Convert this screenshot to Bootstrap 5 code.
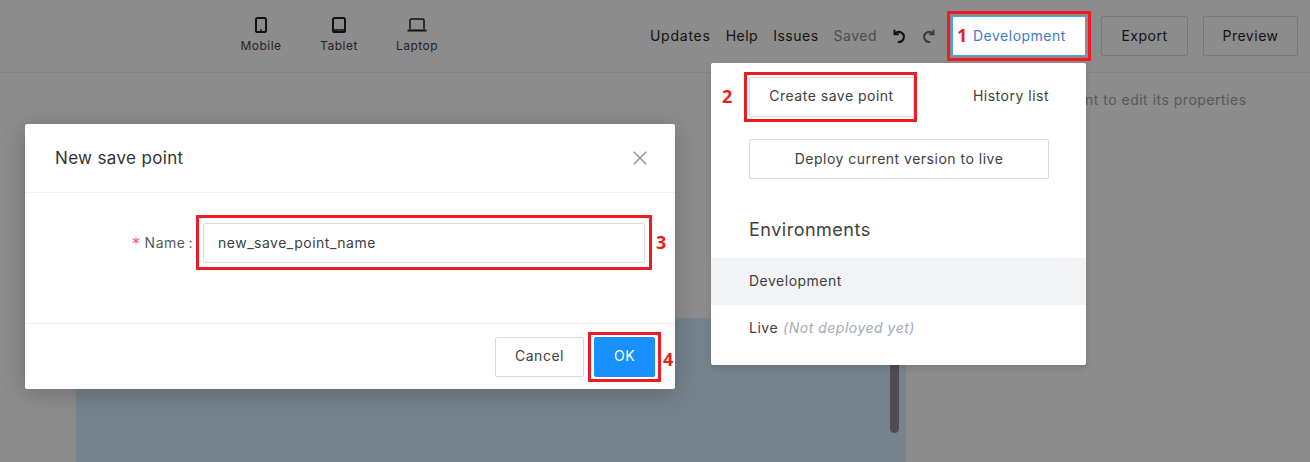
<!DOCTYPE html>
<html lang="en">
<head>
<meta charset="utf-8">
<title>New save point</title>
<link rel="stylesheet" href="https://cdn.jsdelivr.net/npm/bootstrap@5.3.0/dist/css/bootstrap.min.css">
<style>
html,body{height:462px;overflow:hidden}
body{font-family:Inter,"Liberation Sans",sans-serif;font-size:14px;letter-spacing:.5px;color:#262626;background:#fff;position:relative}
.top-bar{height:73px;border-bottom:1px solid #f0f0f0;padding:16px 12px 0 0}
.device-group{margin-left:222px}
.device-item{width:78px;font-size:12px;line-height:15px;color:#3f3f3f}
.device-item svg{display:block;margin-bottom:4px}
.bar-links{margin-left:auto;gap:15px;height:40px}
.bar-link{color:#262626;padding-bottom:2px}
.bar-link.wide-word{letter-spacing:.75px}
.bar-link.off{color:#8c8c8c;margin-right:-1px}
.undo-icon{margin-right:-1px}
.bar-btn{height:40px;border:1px solid #d9d9d9;border-radius:2px;background:#fff;color:#262626;font-size:14px;padding:0 0 2px;letter-spacing:.5px}
.dev-btn{width:134px;border-color:#40a0f5;color:#3f7cc9;text-align:left;padding:0 0 2px 20px;position:relative;z-index:2;background:#fff}
.exp-btn{margin-left:15px;width:87px}
.prev-btn{margin-left:15px;width:95px}
.work-area{height:389px;overflow:hidden}
.canvas-col{width:906px;position:relative;padding:245px 0 0 76px}
.canvas-sheet{width:830px;height:144px;background:#d8eeff;position:relative}
.scroll-thumb{position:absolute;right:7px;top:0;width:9px;height:115px;background:#8f8b96;border-radius:0 0 5px 5px}
.hint-text{padding:16px 0 0 66px;color:#a0a0a0;white-space:nowrap}
.dim-layer{position:absolute;inset:0;background:rgba(0,0,0,.45);z-index:1}
.dlg{position:absolute;z-index:2;left:25px;top:124px;width:650px;height:265px;border:0;border-radius:2px;box-shadow:0 4px 24px rgba(0,0,0,.22);display:flex;flex-direction:column;background:#fff}
.dlg-head{height:69px;padding:0 28px 0 30px;border-bottom:1px solid #f0f0f0}
.dlg-title{font-size:17px;font-weight:400;letter-spacing:.35px;color:#333}
.dlg-x{width:14px;height:14px;display:block}
.dlg-body{height:130px;padding:30px 30px 0 0}
.req-mark{color:#ff4d4f;font-family:"DejaVu Sans",sans-serif;font-size:16px;margin-right:4px;padding-top:3px}
.name-label{width:178px;height:40px;color:#595959;white-space:nowrap;padding-bottom:2px}
.name-colon{margin:0 10px 0 3px}
.name-input{width:442px;height:40px;border:1px solid #d9d9d9;border-radius:2px;font-size:14px;letter-spacing:.5px;color:#404040;padding:0 14px 2px}
.dlg-foot{height:66px;border-top:1px solid #f0f0f0;padding:0 20px;gap:10px}
.foot-btn{height:40px;border-radius:2px;font-size:14px;padding:0 0 2px;letter-spacing:.5px}
.cancel-btn{width:89px;background:#fff;border:1px solid #d9d9d9;color:#404040}
.ok-btn{width:61px;background:#1890ff;border:1px solid #1890ff;color:#fff}
.env-pop{position:absolute;z-index:2;left:711px;top:63px;width:375px;height:302px;background:#fff;border-radius:2px;box-shadow:0 3px 6px rgba(0,0,0,.12)}
.pop-tabs{padding:14px 37px 0 38px;height:76px}
.save-btn{width:165px;height:40px;border:1px solid #d9d9d9;border-radius:2px;background:#fff;color:#404040;font-size:14px;padding:0 0 4px;letter-spacing:.5px}
.hist-link{color:#404040;margin-left:auto;line-height:37px}
.deploy-wrap{padding:0 37px 0 38px;height:62px}
.deploy-btn{width:300px;height:40px;border:1px solid #d9d9d9;border-radius:2px;background:#fff;color:#404040;font-size:14px;padding:0 0 2px;letter-spacing:.5px}
.env-title{padding:0 38px;height:57px;margin:0;font-size:18px;font-weight:400;line-height:58px;color:#404040}
.env-row{padding:0 38px 2px;height:47px;border:0;border-top:1px solid #ececec;border-radius:0;background:#fff;color:#404040;display:flex;align-items:center;gap:5px}
.env-row.active-row{background:#f2f3f5}
.muted-note{color:#a3a9b8;font-style:italic}
.mark-box{position:absolute;z-index:3;border:3px solid #ed1c24;pointer-events:none}
.mark-num{position:absolute;z-index:3;color:#ed1c24;font-family:"Open Sans","Liberation Sans",sans-serif;font-weight:700;font-size:18px;line-height:20px;letter-spacing:0}
</style>
</head>
<body>
<header class="top-bar d-flex align-items-start">
  <nav class="device-group d-flex">
    <div class="device-item d-flex flex-column align-items-center">
      <svg width="16" height="18" viewBox="0 0 16 18" fill="none" stroke="#1f1f1f" stroke-width="2"><rect x="3" y="2" width="10" height="14" rx="1.6"/><circle cx="8" cy="14" r=".9" fill="#1f1f1f" stroke="none"/></svg>
      Mobile
    </div>
    <div class="device-item d-flex flex-column align-items-center">
      <svg width="16" height="18" viewBox="0 0 16 18" fill="none" stroke="#1f1f1f" stroke-width="2"><rect x="2" y="2" width="12" height="14" rx="1.6"/><path d="M2 14h12" stroke-width="1.600"/><circle cx="8" cy="14" r=".8" fill="#8c8c8c" stroke="none"/></svg>
      Tablet
    </div>
    <div class="device-item d-flex flex-column align-items-center">
      <svg width="20" height="18" viewBox="0 0 20 18" fill="none" stroke="#1f1f1f"><path d="M3 13V4.200c0-.7.5-1.200 1.200-1.200h11.600c.7 0 1.200.5 1.200 1.200V13" stroke-width="1.500"/><path d="M.5 14.500h19" stroke-width="2"/></svg>
      Laptop
    </div>
  </nav>
  <div class="bar-links d-flex align-items-center">
    <span class="bar-link wide-word">Updates</span>
    <span class="bar-link">Help</span>
    <span class="bar-link">Issues</span>
    <span class="bar-link off">Saved</span>
    <svg class="undo-icon" width="16" height="16" viewBox="0 0 16 16" fill="none" stroke="#1f1f1f" stroke-width="2"><path d="M3.500 1.800v4.400h4.400"/><path d="M3.800 6A5 5 0 1 1 6.800 13.800"/></svg>
    <svg width="16" height="16" viewBox="0 0 16 16" fill="none" stroke="#6e6e6e" stroke-width="2"><path d="M12.500 1.800v4.400H8.100"/><path d="M12.200 6A5 5 0 1 0 9.200 13.800"/></svg>
    <button class="btn bar-btn dev-btn" type="button">Development</button>
  </div>
  <button class="btn bar-btn exp-btn" type="button">Export</button>
  <button class="btn bar-btn prev-btn" type="button">Preview</button>
</header>
<main class="work-area d-flex">
  <div class="canvas-col">
    <div class="canvas-sheet"><div class="scroll-thumb"></div></div>
  </div>
  <div class="hint-text">Select an element to edit its properties</div>
</main>

<div class="dim-layer"></div>

<div class="dlg modal-content">
  <div class="dlg-head d-flex align-items-center justify-content-between">
    <h5 class="dlg-title m-0">New save point</h5>
    <svg class="dlg-x" viewBox="0 0 14 14" fill="none" stroke="#8c8c8c" stroke-width="1.300"><path d="M.8.8l12.400 12.400M13.200.8L.8 13.200"/></svg>
  </div>
  <div class="dlg-body d-flex align-items-start">
    <label class="name-label d-flex align-items-center justify-content-end"><span class="req-mark">*</span>Name<span class="name-colon">:</span></label>
    <input class="form-control name-input" type="text" value="new_save_point_name">
  </div>
  <div class="dlg-foot d-flex align-items-center justify-content-end">
    <button class="btn foot-btn cancel-btn" type="button">Cancel</button>
    <button class="btn foot-btn ok-btn" type="button">OK</button>
  </div>
</div>

<div class="env-pop">
  <div class="pop-tabs d-flex align-items-start">
    <button class="btn save-btn" type="button">Create save point</button>
    <span class="hist-link">History list</span>
  </div>
  <div class="deploy-wrap"><button class="btn deploy-btn" type="button">Deploy current version to live</button></div>
  <h5 class="env-title">Environments</h5>
  <div class="list-group list-group-flush">
    <div class="list-group-item env-row active-row">Development</div>
    <div class="list-group-item env-row">Live <span class="muted-note">(Not deployed yet)</span></div>
  </div>
</div>

<div class="mark-box" style="left:947px;top:11px;width:144px;height:50px"></div>
<div class="mark-box" style="left:744px;top:72px;width:173px;height:50px"></div>
<div class="mark-box" style="left:196px;top:215px;width:456px;height:55px"></div>
<div class="mark-box" style="left:588px;top:332px;width:73px;height:50px"></div>
<span class="mark-num" style="left:957px;top:25px">1</span>
<span class="mark-num" style="left:722px;top:86px">2</span>
<span class="mark-num" style="left:656px;top:232px">3</span>
<span class="mark-num" style="left:663px;top:349px">4</span>
</body>
</html>
